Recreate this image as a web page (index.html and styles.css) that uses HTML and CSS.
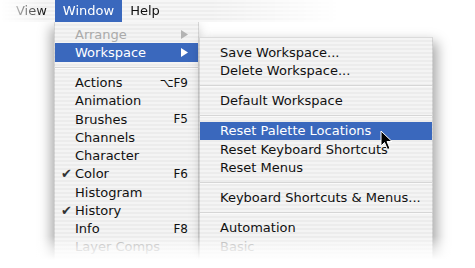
FILE: index.html
```html
<!DOCTYPE html>
<html lang="en">
<head>
    <meta charset="UTF-8">
    <title>Window Menu</title>
    <link rel="stylesheet" href="styles.css">
</head>
<body>
    <div class="screen">
        <div class="menubar">
            <span class="menubar-item">View</span>
            <span class="menubar-item active">Window</span>
            <span class="menubar-item">Help</span>
        </div>

        <div class="menus">
            <!-- Window menu -->
            <ul class="menu main-menu">
                <li class="item disabled"><span>Arrange</span><svg class="arrow" viewBox="0 0 7 9"><polygon points="0,0 7,4.5 0,9"/></svg></li>
                <li class="item selected"><span>Workspace</span><svg class="arrow" viewBox="0 0 7 9"><polygon points="0,0 7,4.5 0,9"/></svg></li>
                <li class="sep"></li>
                <li class="item"><span>Actions</span><span class="key">⌥F9</span></li>
                <li class="item"><span>Animation</span></li>
                <li class="item"><span>Brushes</span><span class="key">F5</span></li>
                <li class="item"><span>Channels</span></li>
                <li class="item"><span>Character</span></li>
                <li class="item"><span class="check">✔</span><span>Color</span><span class="key">F6</span></li>
                <li class="item"><span>Histogram</span></li>
                <li class="item"><span class="check">✔</span><span>History</span></li>
                <li class="item"><span>Info</span><span class="key">F8</span></li>
                <li class="item disabled"><span>Layer Comps</span></li>
            </ul>

            <!-- Workspace submenu -->
            <ul class="menu sub-menu">
                <li class="item"><span>Save Workspace...</span></li>
                <li class="item"><span>Delete Workspace...</span></li>
                <li class="sep"></li>
                <li class="item"><span>Default Workspace</span></li>
                <li class="sep"></li>
                <li class="item selected"><span>Reset Palette Locations</span></li>
                <li class="item"><span>Reset Keyboard Shortcuts</span></li>
                <li class="item"><span>Reset Menus</span></li>
                <li class="sep"></li>
                <li class="item"><span>Keyboard Shortcuts &amp; Menus...</span></li>
                <li class="sep"></li>
                <li class="item"><span>Automation</span></li>
                <li class="item disabled"><span>Basic</span></li>
            </ul>
        </div>

        <div class="fade-bottom"></div>

        <svg class="cursor" viewBox="0 0 13 21">
            <path d="M1 1 L1 16 L4.5 12.5 L7.5 19.5 L10 18.5 L7 11.5 L12 11.5 Z"/>
        </svg>
    </div>
</body>
</html>
```

FILE: styles.css
```css
body {
    margin: 0;
    padding: 0;
    background: #ffffff;
    font-family: 'DejaVu Sans', 'Liberation Sans', sans-serif;
    font-size: 13px;
    color: #111111;
    overflow: hidden;
}
.screen {
    position: relative;
    width: 475px;
    height: 268px;
    overflow: hidden;
}
.menubar {
    display: flex;
    height: 22px;
    padding-left: 8px;
    background: repeating-linear-gradient(to bottom, #f6f6f6 0 2px, #eeeeee 2px 4px);
    box-shadow: 0 4px 7px rgba(0, 0, 0, 0.3);
    -webkit-mask-image: linear-gradient(to right, transparent 0, rgba(0,0,0,0.3) 16px, #000 45px, #000 210px, transparent 340px);
    mask-image: linear-gradient(to right, transparent 0, rgba(0,0,0,0.3) 16px, #000 45px, #000 210px, transparent 340px);
}
.menubar-item {
    padding: 0 8px;
    line-height: 21px;
}
.menubar-item.active {
    background: #3a68bd;
    color: #ffffff;
}
.menus {
    display: flex;
    align-items: flex-start;
    margin-left: 54px;
}
.menu {
    list-style: none;
    margin: 0;
    background: repeating-linear-gradient(to bottom, #f4f4f4 0 2px, #ececec 2px 4px);
    border: 1px solid rgba(0, 0, 0, 0.12);
    border-top: none;
}
.main-menu {
    width: 143px;
    padding: 3px 0 20px;
    box-shadow: -3px 5px 12px rgba(0, 0, 0, 0.35);
}
.sub-menu {
    width: 232px;
    margin-top: 15px;
    padding: 5px 0 20px;
    border-top: 1px solid rgba(0, 0, 0, 0.1);
    box-shadow: 4px 5px 12px rgba(0, 0, 0, 0.35);
    position: relative;
}
.item {
    position: relative;
    display: flex;
    align-items: center;
    height: 18.25px;
    padding: 0 10px 0 20px;
    white-space: nowrap;
}
.item.selected {
    background: #3a68bd;
    color: #ffffff;
}
.item.disabled {
    color: #aaaaaa;
}
.key {
    margin-left: auto;
    font-size: 12px;
}
.arrow {
    margin-left: auto;
    width: 7px;
    height: 9px;
    fill: currentColor;
}
.item.disabled .arrow {
    fill: #b4b4b4;
}
.check {
    position: absolute;
    left: 6px;
    font-size: 13px;
    color: #333333;
}
.sep {
    height: 12px;
    display: flex;
    align-items: center;
}
.sep::before {
    content: "";
    flex: 1;
    border-top: 1px solid #d6d6d6;
    border-bottom: 1px solid #fafafa;
}
.fade-bottom {
    position: absolute;
    left: 0;
    right: 0;
    top: 236px;
    height: 32px;
    background: linear-gradient(to bottom, rgba(255,255,255,0) 0, rgba(255,255,255,0.6) 12px, #ffffff 24px);
}
.cursor {
    position: absolute;
    left: 380px;
    top: 130px;
    width: 13px;
    height: 21px;
}
.cursor path {
    fill: #000000;
    stroke: #ffffff;
    stroke-width: 1;
    stroke-linejoin: round;
}
```
